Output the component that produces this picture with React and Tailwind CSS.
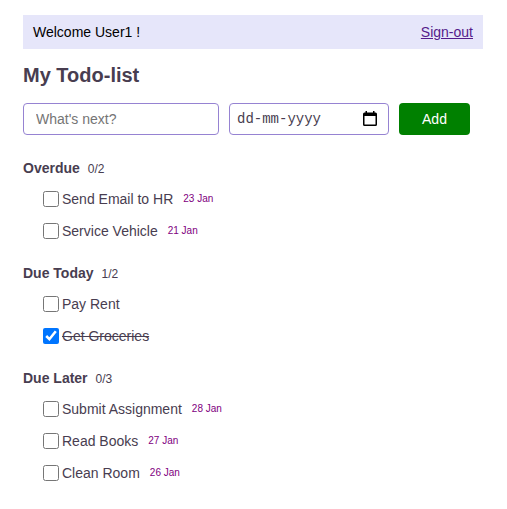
import { useState } from "react";

const initialSections = [
  {
    title: "Overdue",
    items: [
      { id: 1, text: "Send Email to HR", date: "23 Jan", done: false },
      { id: 2, text: "Service Vehicle", date: "21 Jan", done: false },
    ],
  },
  {
    title: "Due Today",
    items: [
      { id: 3, text: "Pay Rent", done: false },
      { id: 4, text: "Get Groceries", done: true },
    ],
  },
  {
    title: "Due Later",
    items: [
      { id: 5, text: "Submit Assignment", date: "28 Jan", done: false },
      { id: 6, text: "Read Books", date: "27 Jan", done: false },
      { id: 7, text: "Clean Room", date: "26 Jan", done: false },
    ],
  },
];

function TodoItem({ item, onToggle }) {
  const id = `todo-${item.id}`;
  return (
    <li className="flex h-8 items-center">
      <input
        id={id}
        type="checkbox"
        checked={item.done}
        onChange={() => onToggle(item.id)}
        className="size-4 shrink-0"
      />
      <label htmlFor={id} className={item.done ? "ml-[3px] line-through" : "ml-[3px]"}>
        {item.text}
      </label>
      {item.date && <time className="ml-2.5 text-[10px] text-[#800080]">{item.date}</time>}
    </li>
  );
}

function Section({ section, onToggle }) {
  const done = section.items.filter((item) => item.done).length;
  return (
    <section>
      <h2 className="flex items-baseline gap-2 font-bold leading-5">
        {section.title}
        <span className="text-xs font-normal">
          {done}/{section.items.length}
        </span>
      </h2>
      <ul className="mt-[5px] pl-5">
        {section.items.map((item) => (
          <TodoItem key={item.id} item={item} onToggle={onToggle} />
        ))}
      </ul>
    </section>
  );
}

function CalendarIcon() {
  return (
    <svg viewBox="0 0 14 16" className="h-4 w-3.5" aria-hidden="true">
      <path
        d="M1.5 1.5H2.5V0H4V1.5H10V0H11.5V1.5H12.5Q14 1.5 14 3V13.5Q14 15 12.5 15H1.5Q0 15 0 13.5V3Q0 1.5 1.5 1.5ZM1.5 5V13.5H12.5V5Z"
        fill="#000"
        fillRule="evenodd"
      />
    </svg>
  );
}

export default function App() {
  const [sections, setSections] = useState(initialSections);

  const toggle = (id) =>
    setSections((current) =>
      current.map((section) => ({
        ...section,
        items: section.items.map((item) => (item.id === id ? { ...item, done: !item.done } : item)),
      }))
    );

  return (
    <div className="bg-white pt-[15px] pr-6 pb-5 pl-[23px] font-['Liberation_Sans',Arial,sans-serif] text-sm text-[#483d50]">
      <header className="flex items-center justify-between bg-[#e6e6fa] px-2.5 py-[7px] text-black">
        <span>Welcome User1 !</span>
        <a href="#sign-out" className="text-[#551a8b] underline">
          Sign-out
        </a>
      </header>
      <main>
        <h1 className="mt-3 text-xl font-bold">My Todo-list</h1>
        <form className="mt-3.5 flex gap-2.5 pr-[13px]" onSubmit={(event) => event.preventDefault()}>
          <input
            type="text"
            aria-label="New task"
            placeholder="What's next?"
            className="h-8 min-w-0 flex-1 rounded border border-[#9683d2] px-3 placeholder:text-[#757575]"
          />
          <div className="flex h-8 w-40 items-center rounded border border-[#9683d2] pr-[11px] pl-[7px]">
            <input
              type="text"
              aria-label="Due date"
              placeholder="dd-mm-yyyy"
              className="min-w-0 flex-1 font-['Liberation_Mono',monospace] text-sm outline-none placeholder:text-[#483d50]"
            />
            <button type="button" aria-label="Open calendar">
              <CalendarIcon />
            </button>
          </div>
          <button type="submit" className="h-8 w-[71px] rounded bg-[#008000] text-white">
            Add
          </button>
        </form>
        <div className="mt-[23px] flex flex-col gap-4">
          {sections.map((section) => (
            <Section key={section.title} section={section} onToggle={toggle} />
          ))}
        </div>
      </main>
    </div>
  );
}
